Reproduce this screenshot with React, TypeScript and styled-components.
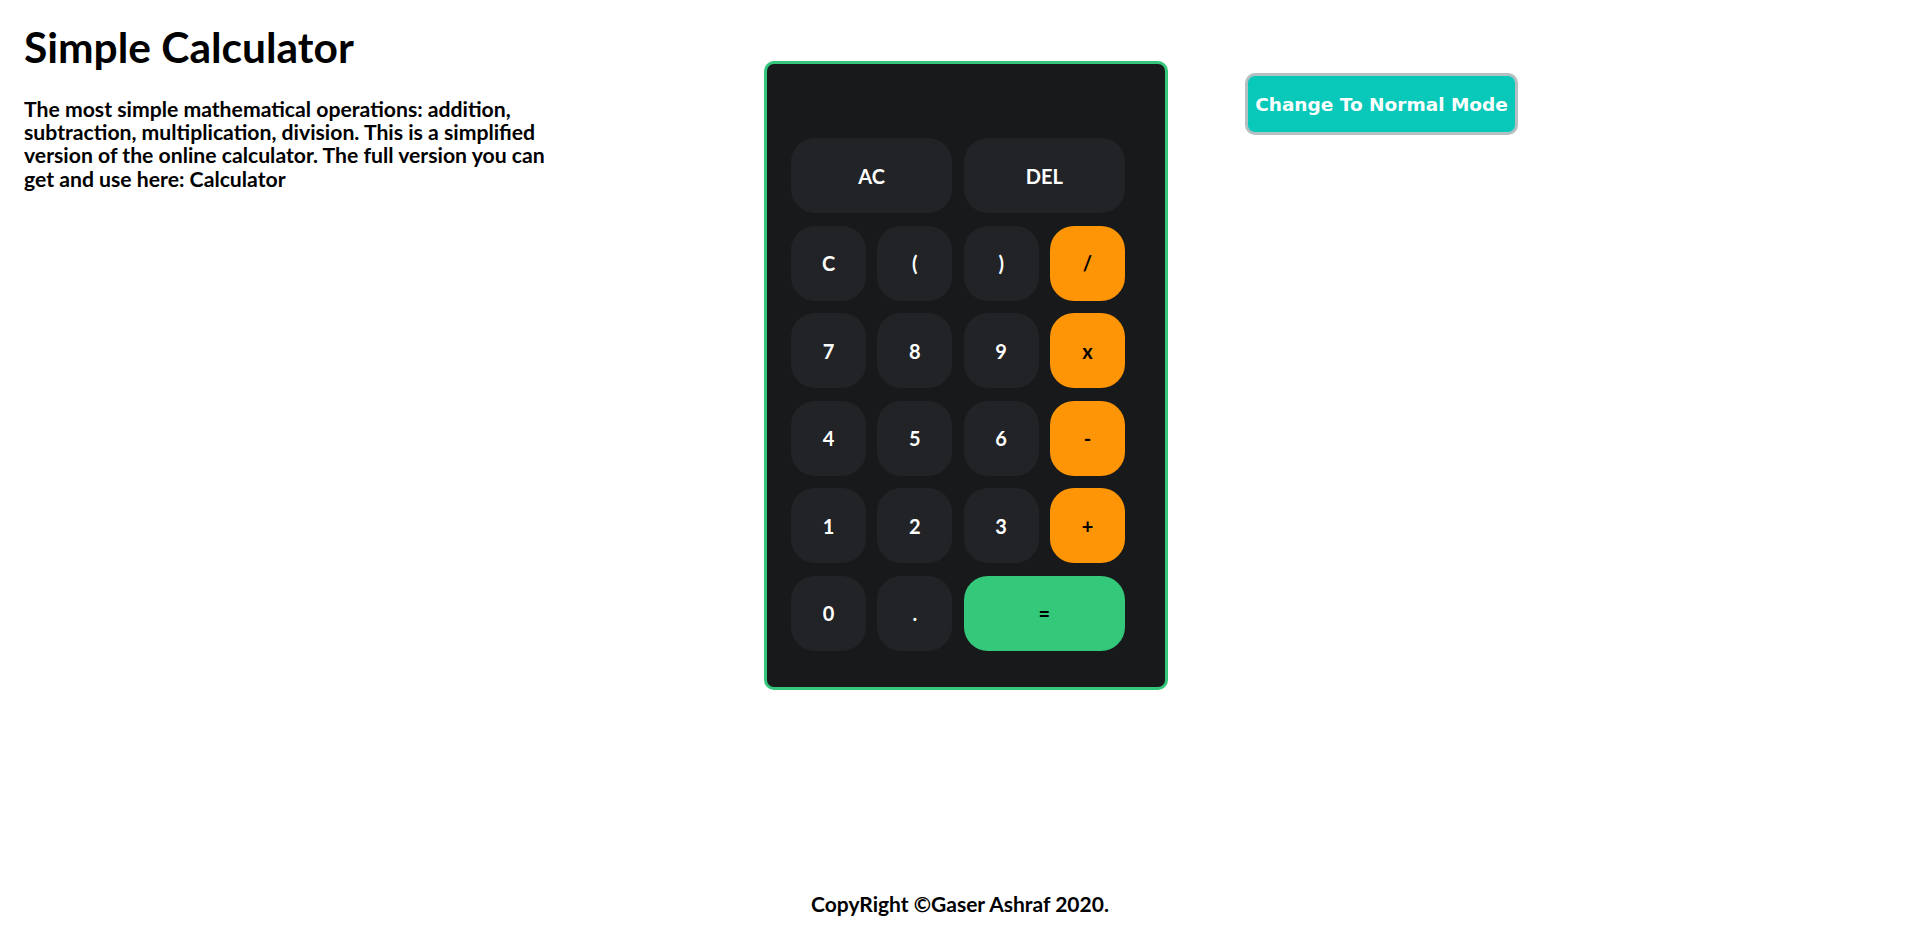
import React from "react";
import styled, { createGlobalStyle } from "styled-components";

const Global = createGlobalStyle`
  html, body { margin: 0; padding: 0; background: #ffffff; }
  body { font-family: "Lato", "Noto Sans", sans-serif; color: #000; }
  * { box-sizing: border-box; }
`;

const Page = styled.div`
  min-height: 100vh;
  display: flex;
  flex-direction: column;
`;

const Main = styled.div`
  display: grid;
  grid-template-columns: 663px 404px 1fr;
  column-gap: 77px;
  align-items: start;
  padding-left: 24px;
`;

const Intro = styled.section`
  padding-top: 22px;
  width: 540px;
`;

const Title = styled.h1`
  margin: 0;
  font-size: 42.5px;
  font-weight: 700;
  line-height: 50px;
`;

const Lead = styled.p`
  margin: 26px 0 0;
  font-size: 21.2px;
  font-weight: 700;
  line-height: 23.2px;
`;

const Calculator = styled.div`
  margin-top: 61px;
  width: 404px;
  height: 629px;
  background: #18191b;
  border: 3px solid #34c77b;
  border-radius: 10px;
  padding: 0 40px 0 24px;
`;

const Display = styled.div`
  height: 74px;
`;

const Keys = styled.div`
  display: grid;
  grid-template-columns: repeat(4, 75px);
  grid-auto-rows: 75px;
  column-gap: 11.33px;
  row-gap: 12.6px;
`;

type Kind = "num" | "op" | "eq";

const Key = styled.button<{ $kind: Kind; $span?: number }>`
  grid-column: span ${(p) => p.$span ?? 1};
  border: none;
  border-radius: 24px;
  font-family: "Lato", "Noto Sans", sans-serif;
  font-weight: 700;
  font-size: 20px;
  cursor: pointer;
  background: ${(p) =>
    p.$kind === "op" ? "#fe9507" : p.$kind === "eq" ? "#33c87a" : "#222327"};
  color: ${(p) => (p.$kind === "num" ? "#ffffff" : "#000000")};
`;

const ModeButton = styled.button`
  margin-top: 73px;
  width: 273px;
  height: 62px;
  background: #08c9b9;
  border: 3px solid #b3bfc3;
  border-radius: 10px;
  color: #ffffff;
  font-family: "DejaVu Sans", "Verdana", sans-serif;
  font-weight: 700;
  font-size: 18.5px;
  padding: 0;
  justify-self: start;
  cursor: pointer;
`;

const Footer = styled.footer`
  margin-top: auto;
  padding-bottom: 22px;
  text-align: center;
  font-size: 21px;
  font-weight: 700;
`;

const keys: { label: string; kind: Kind; span?: number }[] = [
  { label: "AC", kind: "num", span: 2 },
  { label: "DEL", kind: "num", span: 2 },
  { label: "C", kind: "num" },
  { label: "(", kind: "num" },
  { label: ")", kind: "num" },
  { label: "/", kind: "op" },
  { label: "7", kind: "num" },
  { label: "8", kind: "num" },
  { label: "9", kind: "num" },
  { label: "x", kind: "op" },
  { label: "4", kind: "num" },
  { label: "5", kind: "num" },
  { label: "6", kind: "num" },
  { label: "-", kind: "op" },
  { label: "1", kind: "num" },
  { label: "2", kind: "num" },
  { label: "3", kind: "num" },
  { label: "+", kind: "op" },
  { label: "0", kind: "num" },
  { label: ".", kind: "num" },
  { label: "=", kind: "eq", span: 2 },
];

export default function App() {
  return (
    <Page>
      <Global />
      <Main>
        <Intro>
          <Title>Simple Calculator</Title>
          <Lead>
            The most simple mathematical operations: addition, subtraction,
            multiplication, division. This is a simplified version of the
            online calculator. The full version you can get and use here:
            Calculator
          </Lead>
        </Intro>
        <Calculator>
          <Display />
          <Keys>
            {keys.map((k, i) => (
              <Key key={i} $kind={k.kind} $span={k.span}>
                {k.label}
              </Key>
            ))}
          </Keys>
        </Calculator>
        <ModeButton>Change To Normal Mode</ModeButton>
      </Main>
      <Footer>CopyRight ©Gaser Ashraf 2020.</Footer>
    </Page>
  );
}
